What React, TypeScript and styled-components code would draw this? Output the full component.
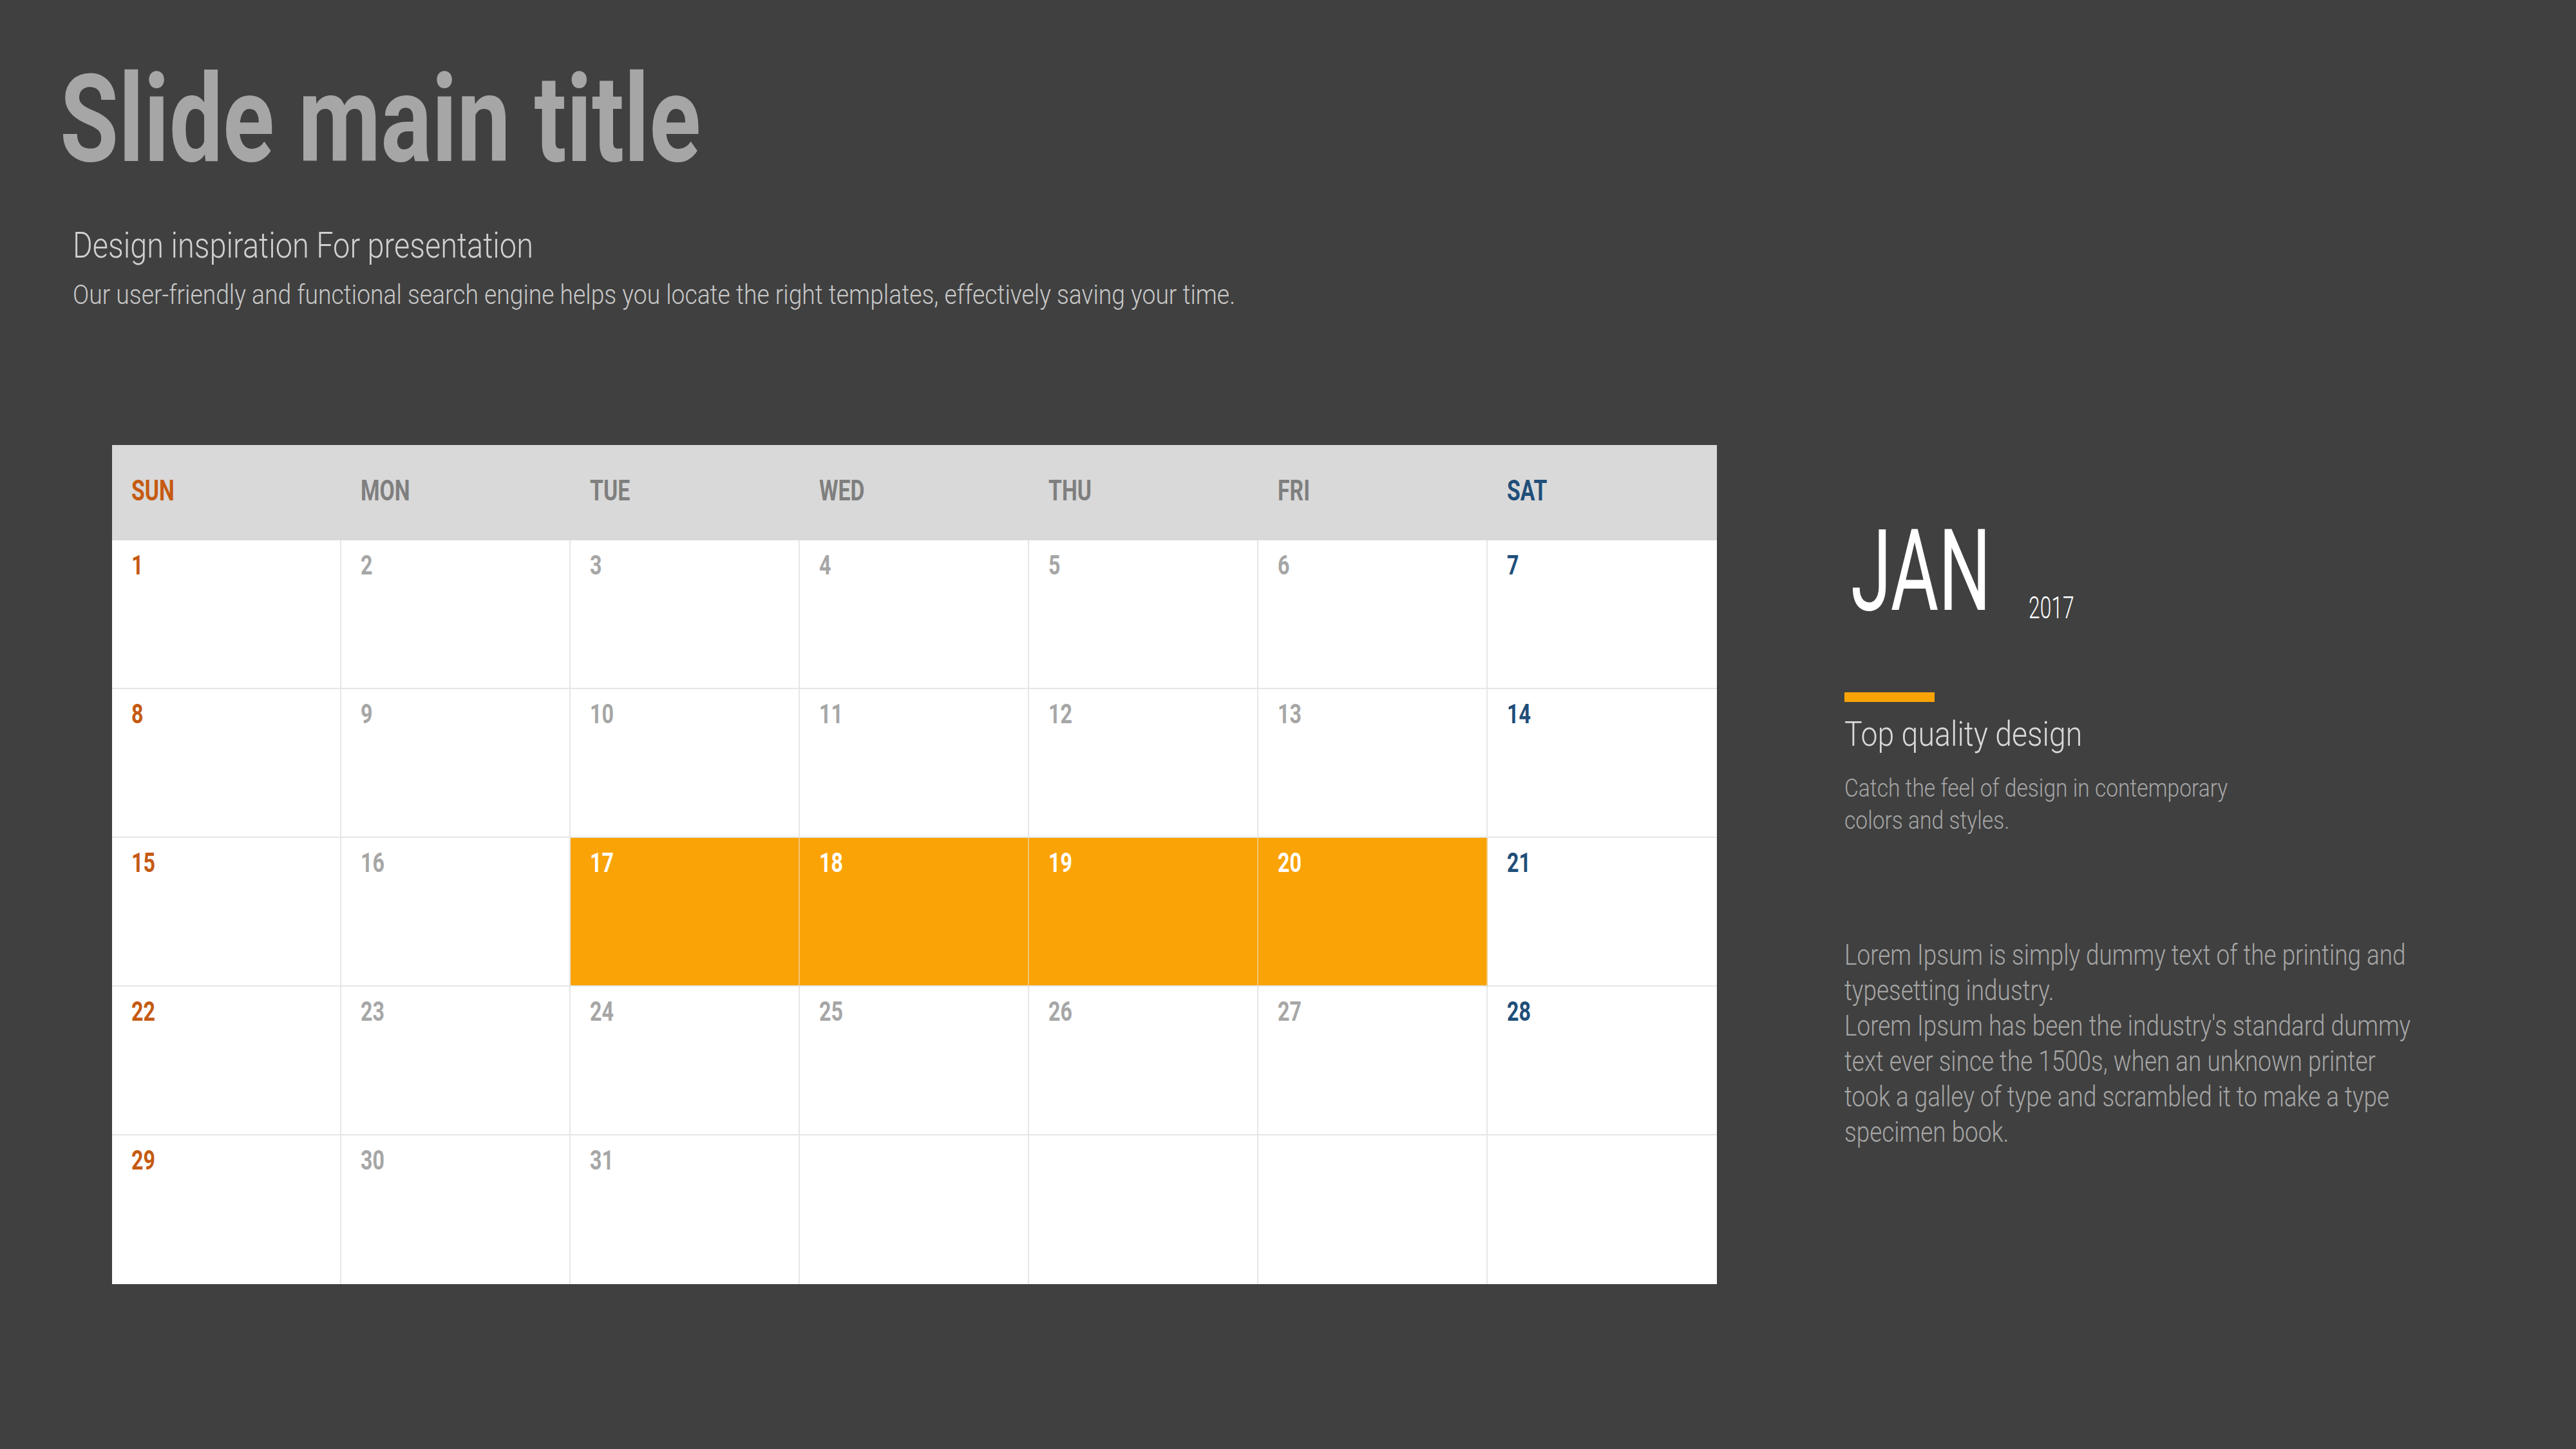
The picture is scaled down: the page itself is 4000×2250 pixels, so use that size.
import React, { useLayoutEffect, useRef, useState } from "react";
import styled, { createGlobalStyle } from "styled-components";

const GlobalStyle = createGlobalStyle`
  html, body {
    margin: 0;
    padding: 0;
    background: #404040;
  }
  body {
    font-family: Roboto, "Liberation Sans", sans-serif;
  }
`;

type Tone = "sun" | "mid" | "sat" | "hl";

const toneColor = (t: Tone, head = false) => {
    if (t === "sun") return "#c55a11";
    if (t === "sat") return "#1f4e79";
    if (t === "hl") return "#ffffff";
    return head ? "#7f7f7f" : "#a6a6a6";
};

const Page = styled.div`
    width: 4000px;
    height: 2250px;
    box-sizing: border-box;
    background: #404040;
    padding: 90px 0 0 93px;
    display: flex;
    flex-direction: column;
`;

const Title = styled.h1`
    margin: 0;
    font-size: 190px;
    font-weight: 700;
    line-height: 1;
    color: #a6a6a6;
`;

const Intro = styled.div`
    margin: 73px 0 0 20px;
    display: flex;
    flex-direction: column;
    gap: 28px;
`;

const Subtitle = styled.h2`
    margin: 0;
    font-size: 56px;
    font-weight: 300;
    line-height: 1;
    color: #d0d0d0;
`;

const Lead = styled.p`
    margin: 0;
    font-size: 42px;
    font-weight: 300;
    line-height: 1;
    color: #c8c8c8;
`;

const Main = styled.div`
    margin: 212px 0 0 81px;
    display: flex;
    align-items: flex-start;
`;

const Calendar = styled.div`
    width: 2492px;
    display: grid;
    grid-template-columns: repeat(7, 1fr);
    grid-template-rows: 148px repeat(5, 231px);
    background: #ffffff;
`;

const HeadCell = styled.div<{ $tone: Tone }>`
    background: #d9d9d9;
    display: flex;
    align-items: center;
    box-sizing: border-box;
    padding: 0 0 7px 30px;
    color: ${(p) => toneColor(p.$tone, true)};
`;

const DayCell = styled.div<{ $hl: boolean; $lastCol: boolean; $lastRow: boolean }>`
    box-sizing: border-box;
    padding: 17px 0 0 30px;
    background: ${(p) => (p.$hl ? "#f9a307" : "#ffffff")};
    border-right: ${(p) =>
        p.$lastCol ? "none" : p.$hl ? "2px solid rgba(235, 225, 210, 0.55)" : "2px solid #e6e6e6"};
    border-bottom: ${(p) => (p.$lastRow ? "none" : "2px solid #e6e6e6")};
`;

const Label = styled.span<{ $tone: Tone; $head?: boolean }>`
    display: inline-block;
    font-size: ${(p) => (p.$head ? 45 : 43)}px;
    font-weight: 700;
    line-height: 1;
    color: ${(p) => toneColor(p.$tone, p.$head)};
    transform: scaleX(0.75);
    transform-origin: left top;
`;

const Side = styled.aside`
    margin-left: 198px;
    padding-top: 108px;
    width: 950px;
    display: flex;
    flex-direction: column;
`;

const MonthRow = styled.div`
    display: flex;
    align-items: flex-end;
`;

const Month = styled.div`
    width: 218px;
    margin-left: 10px;
    font-size: 176px;
    font-weight: 400;
    line-height: 1;
    color: #ffffff;
`;

const Year = styled.div`
    width: 71px;
    margin: 0 0 7px 58px;
    font-size: 48px;
    font-weight: 300;
    line-height: 1;
    color: #ffffff;
`;

const Accent = styled.div`
    margin-top: 100px;
    width: 140px;
    height: 15px;
    background: #f9a307;
`;

const Feature = styled.h3`
    margin: 24px 0 0;
    font-size: 53px;
    font-weight: 300;
    line-height: 1;
    color: #d9d9d9;
`;

const Caption = styled.p`
    margin: 32px 0 0;
    font-size: 38px;
    font-weight: 300;
    line-height: 50px;
    color: #a6a6a6;
`;

const Body = styled.p`
    margin: 156px 0 0;
    font-size: 45px;
    font-weight: 300;
    line-height: 55px;
    color: #a6a6a6;
`;

const Squeeze = styled.span`
    display: inline-block;
    white-space: nowrap;
    transform-origin: left top;
`;

// squeezes a line (or block of lines) horizontally to the width it has in the slide
function Fit({ w, children }: { w: number; children: React.ReactNode }) {
    const ref = useRef<HTMLSpanElement>(null);
    const [k, setK] = useState(0.75);
    useLayoutEffect(() => {
        const el = ref.current;
        if (!el) return;
        const measure = () => {
            const n = el.offsetWidth;
            if (n) setK(w / n);
        };
        measure();
        document.fonts?.ready.then(measure);
    }, [w]);
    return (
        <Squeeze ref={ref} style={{ transform: `scaleX(${k})` }}>
            {children}
        </Squeeze>
    );
}

const DAYS: { name: string; tone: Tone }[] = [
    { name: "SUN", tone: "sun" },
    { name: "MON", tone: "mid" },
    { name: "TUE", tone: "mid" },
    { name: "WED", tone: "mid" },
    { name: "THU", tone: "mid" },
    { name: "FRI", tone: "mid" },
    { name: "SAT", tone: "sat" },
];

const HIGHLIGHT = [17, 18, 19, 20];

export default function App() {
    const cells = Array.from({ length: 35 }, (_, i) => (i < 31 ? i + 1 : null));

    return (
        <>
            <GlobalStyle />
            <Page>
                <Title>
                    <Fit w={995}>Slide main title</Fit>
                </Title>
                <Intro>
                    <Subtitle>
                        <Fit w={715}>Design inspiration For presentation</Fit>
                    </Subtitle>
                    <Lead>
                        <Fit w={1805}>
                            Our user-friendly and functional search engine helps you locate the right
                            templates, effectively saving your time.
                        </Fit>
                    </Lead>
                </Intro>

                <Main>
                    <Calendar>
                        {DAYS.map((d) => (
                            <HeadCell key={d.name} $tone={d.tone}>
                                <Label $tone={d.tone} $head>
                                    {d.name}
                                </Label>
                            </HeadCell>
                        ))}
                        {cells.map((n, i) => {
                            const col = i % 7;
                            const hl = n !== null && HIGHLIGHT.includes(n);
                            const tone: Tone = hl ? "hl" : DAYS[col].tone;
                            return (
                                <DayCell
                                    key={i}
                                    $hl={hl}
                                    $lastCol={col === 6}
                                    $lastRow={i >= 28}
                                >
                                    {n !== null && <Label $tone={tone}>{n}</Label>}
                                </DayCell>
                            );
                        })}
                    </Calendar>

                    <Side>
                        <MonthRow>
                            <Month>
                                <Fit w={218}>JAN</Fit>
                            </Month>
                            <Year>
                                <Fit w={71}>2017</Fit>
                            </Year>
                        </MonthRow>
                        <Accent />
                        <Feature>
                            <Fit w={369}>Top quality design</Fit>
                        </Feature>
                        <Caption>
                            <Fit w={595}>
                                Catch the feel of design in contemporary
                                <br />
                                colors and styles.
                            </Fit>
                        </Caption>
                        <Body>
                            <Fit w={879}>
                                Lorem Ipsum is simply dummy text of the printing and
                                <br />
                                typesetting industry.
                                <br />
                                Lorem Ipsum has been the industry's standard dummy
                                <br />
                                text ever since the 1500s, when an unknown printer
                                <br />
                                took a galley of type and scrambled it to make a type
                                <br />
                                specimen book.
                            </Fit>
                        </Body>
                    </Side>
                </Main>
            </Page>
        </>
    );
}
